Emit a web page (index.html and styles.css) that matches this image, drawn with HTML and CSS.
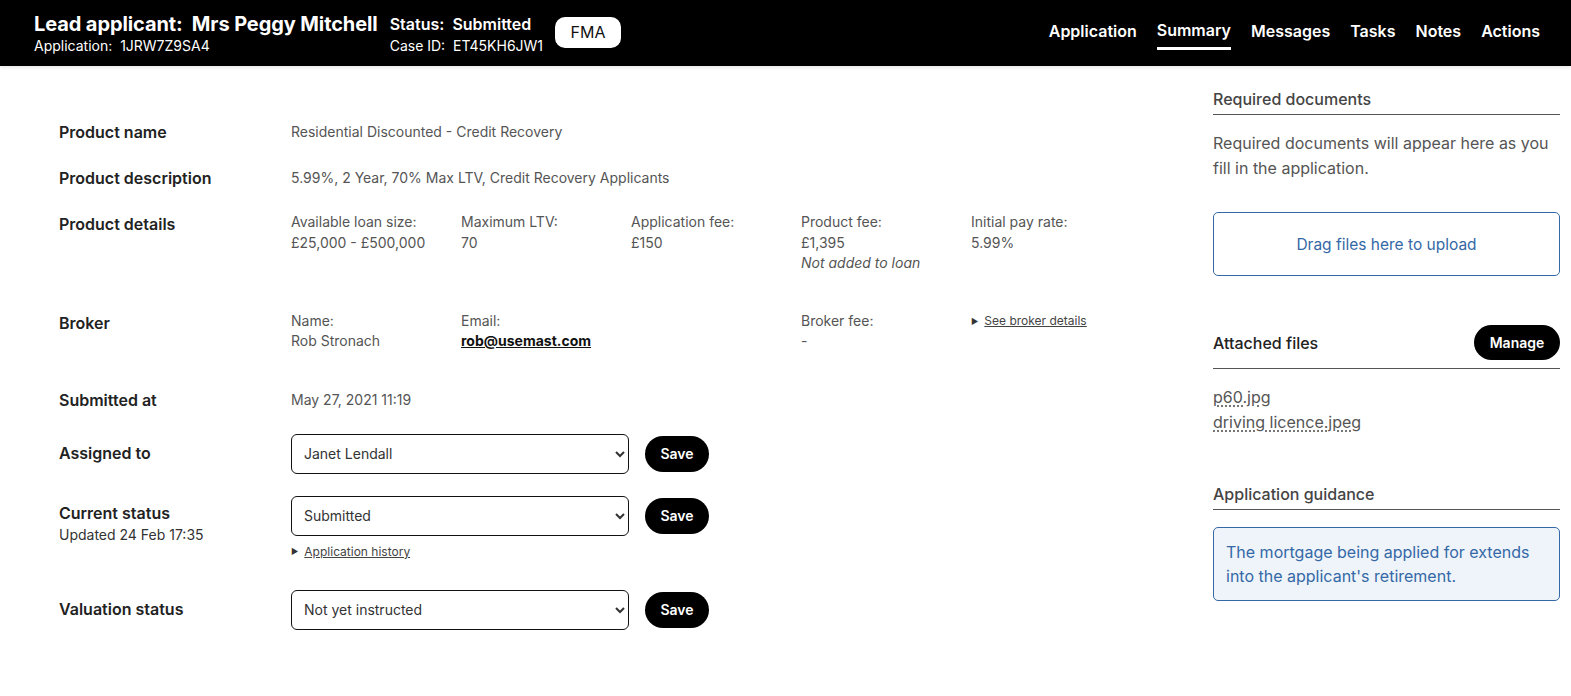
FILE: index.html
```html
<!DOCTYPE html>
<html lang="en">
<head>
<meta charset="utf-8">
<title>Summary</title>
<link rel="stylesheet" href="styles.css">
</head>
<body>
<header class="topbar">
  <div class="applicant">
    <div class="applicant-name">Lead applicant:&nbsp; Mrs Peggy Mitchell</div>
    <div class="applicant-sub">Application:&nbsp; 1JRW7Z9SA4</div>
  </div>
  <div class="status">
    <div class="status-main">Status:&nbsp; Submitted</div>
    <div class="status-sub">Case ID:&nbsp; ET45KH6JW1</div>
  </div>
  <div class="pill">FMA</div>
  <nav class="nav">
    <a class="nav-item">Application</a>
    <a class="nav-item active">Summary</a>
    <a class="nav-item">Messages</a>
    <a class="nav-item">Tasks</a>
    <a class="nav-item">Notes</a>
    <a class="nav-item">Actions</a>
  </nav>
</header>

<div class="page">
  <main class="main">
    <div class="row r-name">
      <div class="label">Product name</div>
      <div class="value">Residential Discounted - Credit Recovery</div>
    </div>
    <div class="row r-desc">
      <div class="label">Product description</div>
      <div class="value">5.99%, 2 Year, 70% Max LTV, Credit Recovery Applicants</div>
    </div>
    <div class="row r-details">
      <div class="label">Product details</div>
      <div class="cols">
        <div class="col"><div>Available loan size:</div><div>£25,000 - £500,000</div></div>
        <div class="col"><div>Maximum LTV:</div><div>70</div></div>
        <div class="col"><div>Application fee:</div><div>£150</div></div>
        <div class="col"><div>Product fee:</div><div>£1,395</div><div class="note">Not added to loan</div></div>
        <div class="col"><div>Initial pay rate:</div><div>5.99%</div></div>
      </div>
    </div>
    <div class="row r-broker">
      <div class="label">Broker</div>
      <div class="cols">
        <div class="col"><div>Name:</div><div>Rob Stronach</div></div>
        <div class="col"><div>Email:</div><div><a class="email">rob@usemast.com</a></div></div>
        <div class="col"></div>
        <div class="col"><div>Broker fee:</div><div>-</div></div>
        <div class="col"><div class="disclosure"><span class="tri">&#9654;</span><span class="small-link">See broker details</span></div></div>
      </div>
    </div>
    <div class="row r-submitted">
      <div class="label">Submitted at</div>
      <div class="value">May 27, 2021 11:19</div>
    </div>
    <div class="row r-form r-assigned">
      <div class="label">Assigned to</div>
      <div class="control">
        <div class="control-line">
          <select class="select"><option>Janet Lendall</option></select>
          <button class="btn">Save</button>
        </div>
      </div>
    </div>
    <div class="row r-form r-status">
      <div class="label">Current status<div class="label-sub">Updated 24 Feb 17:35</div></div>
      <div class="control">
        <div class="control-line">
          <select class="select"><option>Submitted</option></select>
          <button class="btn">Save</button>
        </div>
        <div class="disclosure history"><span class="tri">&#9654;</span><span class="small-link">Application history</span></div>
      </div>
    </div>
    <div class="row r-form r-valuation">
      <div class="label">Valuation status</div>
      <div class="control">
        <div class="control-line">
          <select class="select"><option>Not yet instructed</option></select>
          <button class="btn">Save</button>
        </div>
      </div>
    </div>
  </main>

  <aside class="side">
    <h2 class="side-head">Required documents</h2>
    <p class="side-text">Required documents will appear here as you fill in the application.</p>
    <div class="dropzone">Drag files here to upload</div>

    <div class="side-head flex-head attached">
      <span>Attached files</span>
      <button class="btn btn-manage">Manage</button>
    </div>
    <ul class="files">
      <li><a class="file">p60.jpg</a></li>
      <li><a class="file">driving licence.jpeg</a></li>
    </ul>

    <h2 class="side-head guidance-head">Application guidance</h2>
    <div class="guidance">The mortgage being applied for extends into the applicant's retirement.</div>
  </aside>
</div>
</body>
</html>
```

FILE: styles.css
```css
* { box-sizing: border-box; }
html, body { margin: 0; padding: 0; }
body {
  font-family: Inter, "Noto Sans", sans-serif;
  color: #222;
  background: #fff;
  width: 1571px;
  height: 696px;
  overflow: hidden;
}

/* Header */
.topbar {
  height: 66px;
  background: #000;
  color: #fff;
  display: flex;
  align-items: center;
  padding: 0 31px 0 34px;
  box-shadow: 0 2px 3px rgba(0,0,0,0.08);
  position: relative;
  z-index: 1;
}
.applicant-name { font-size: 20px; font-weight: 700; line-height: 24px; letter-spacing: -0.1px; }
.applicant-sub { font-size: 14px; line-height: 18px; margin-top: 1px; }
.status { margin-left: 12px; }
.status-main { font-size: 16px; font-weight: 600; line-height: 22px; margin-top: 1px; }
.status-sub { font-size: 14px; line-height: 18px; margin-top: 2px; }
.pill {
  margin-left: 12px;
  background: #fff;
  color: #111;
  border-radius: 10px;
  width: 66px;
  height: 31px;
  display: flex;
  align-items: center;
  justify-content: center;
  font-size: 16px;
  margin-top: -2px;
}
.nav { margin-left: auto; display: flex; gap: 20px; align-items: center; margin-top: -2px; }
.nav-item {
  font-size: 16px;
  font-weight: 600;
  color: #fff;
  line-height: 22px;
  padding-top: 2px;
  border-bottom: 2px solid transparent;
  padding-bottom: 2px;
}
.nav-item.active {
  border-bottom: 3px solid #fff;
  padding-top: 0;
  padding-bottom: 6px;
  margin-bottom: -5px;
}

/* Page */
.page {
  display: flex;
  height: 630px;
}
.main {
  flex: 1;
  padding: 56px 0 0 59px;
}
.row {
  display: grid;
  grid-template-columns: 232px 1fr;
  align-items: start;
}
.label { font-size: 16px; font-weight: 600; line-height: 20px; color: #222; }
.label-sub { font-size: 14px; font-weight: 400; color: #333; line-height: 20px; margin-top: 2px; }
.value { font-size: 14px; line-height: 20px; color: #555; }
.r-desc { margin-top: 26px; }
.r-details { margin-top: 26px; }
.r-broker { margin-top: 39px; }
.r-submitted { margin-top: 38px; }
.cols { display: grid; grid-template-columns: repeat(5, 170px); font-size: 14px; color: #555; line-height: 20.5px; margin-top: -2px; }
.note { font-style: italic; }
.email { color: #111; font-weight: 700; text-decoration: underline; }
.disclosure { display: flex; align-items: center; gap: 6px; color: #444; }
.tri { font-size: 8px; color: #333; }
.small-link { font-size: 12px; text-decoration: underline; color: #444; line-height: 15px; }
.r-assigned { margin-top: 24px; }
.r-status { margin-top: 22px; }
.r-valuation { margin-top: 31px; }
.r-form .label { padding-top: 9px; }
.r-status .label { padding-top: 7px; }
.control-line { display: flex; align-items: center; gap: 16px; }
.select {
  width: 338px;
  height: 40px;
  border: 1px solid #111;
  border-radius: 6px;
  background: #fff;
  font-family: Inter, "Noto Sans", sans-serif;
  font-size: 14px;
  color: #333;
  padding: 0 8px;
}
.btn {
  background: #000;
  color: #fff;
  border: 0;
  border-radius: 18px;
  height: 36px;
  width: 64px;
  font-family: Inter, "Noto Sans", sans-serif;
  font-size: 14px;
  font-weight: 600;
  padding: 0;
}
.history { margin-top: 8px; }

/* Sidebar */
.side {
  width: 347px;
  margin-right: 11px;
  padding-top: 22px;
}
.side-head {
  margin: 0;
  font-size: 16px;
  font-weight: 500;
  color: #444;
  line-height: 22px;
  padding-bottom: 4px;
  border-bottom: 1px solid #555;
}
.side-text { margin: 16px 0 0; font-size: 16px; line-height: 25px; color: #555; }
.dropzone {
  margin-top: 31px;
  height: 64px;
  border: 1px solid #3468a6;
  border-radius: 5px;
  display: flex;
  align-items: center;
  justify-content: center;
  color: #3468a6;
  font-size: 15.5px;
}
.flex-head {
  display: flex;
  align-items: center;
  justify-content: space-between;
  padding-bottom: 8px;
}
.attached { margin-top: 49px; color: #222; }
.btn-manage { width: 86px; height: 35px; font-size: 14px; }
.files { list-style: none; margin: 16px 0 0; padding: 0; font-size: 16px; line-height: 25px; }
.file { color: #555; text-decoration: underline dotted; text-underline-offset: 3px; }
.guidance-head { margin-top: 48px; }
.guidance {
  margin-top: 17px;
  background: #eef4fa;
  border: 1px solid #3468a6;
  border-radius: 5px;
  padding: 12px 12px;
  color: #3468a6;
  font-size: 16px;
  line-height: 24px;
}
```
